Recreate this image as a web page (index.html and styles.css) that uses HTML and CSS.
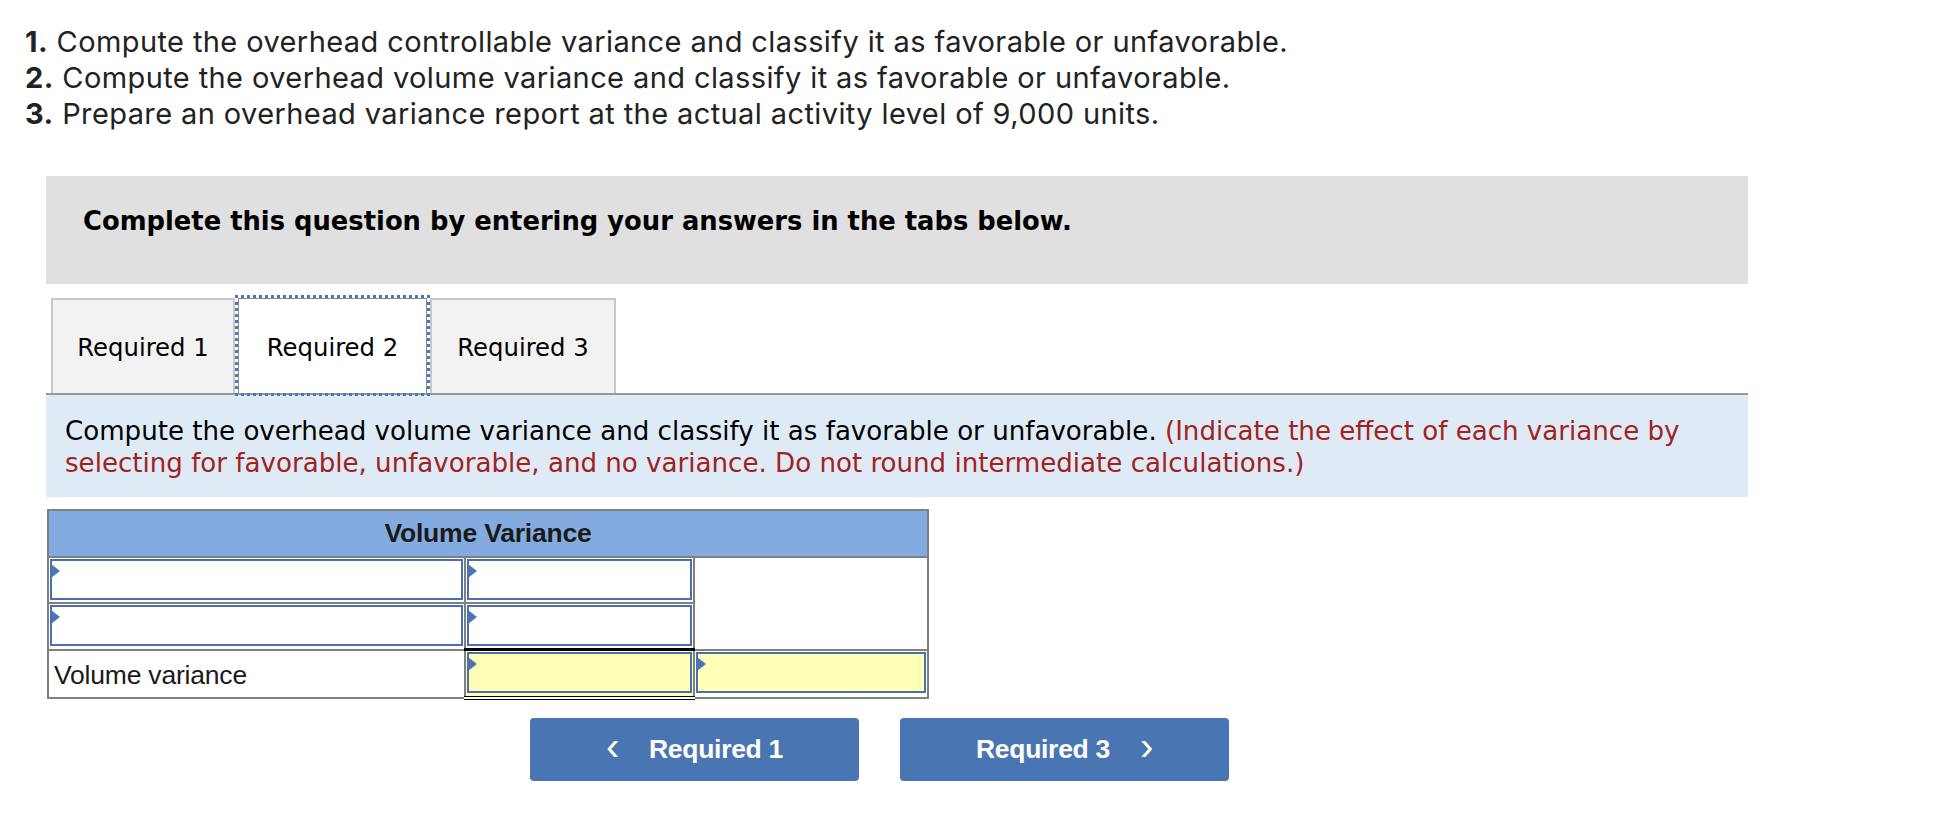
FILE: index.html
```html
<!DOCTYPE html>
<html>
<head>
<meta charset="utf-8">
<link rel="stylesheet" href="styles.css">
</head>
<body>
<div class="questions">
  <p><b>1.</b> Compute the overhead controllable variance and classify it as favorable or unfavorable.</p>
  <p><b>2.</b> Compute the overhead volume variance and classify it as favorable or unfavorable.</p>
  <p><b>3.</b> Prepare an overhead variance report at the actual activity level of 9,000 units.</p>
</div>

<div class="instruct-box">Complete this question by entering your answers in the tabs below.</div>

<div class="tabs">
  <div class="tab">Required 1</div>
  <div class="tab active">Required 2</div>
  <div class="tab">Required 3</div>
</div>

<div class="panel">
  Compute the overhead volume variance and classify it as favorable or unfavorable. <span class="red">(Indicate the effect of each variance by<br>selecting for favorable, unfavorable, and no variance. Do not round intermediate calculations.)</span>
</div>

<table class="vtable">
  <colgroup>
    <col class="w1">
    <col class="w2">
    <col class="w3">
  </colgroup>
  <tr><th colspan="3">Volume Variance</th></tr>
  <tr>
    <td><div class="inp"><span class="mark"></span></div></td>
    <td><div class="inp"><span class="mark"></span></div></td>
    <td class="blank" rowspan="2"></td>
  </tr>
  <tr>
    <td><div class="inp"><span class="mark"></span></div></td>
    <td><div class="inp"><span class="mark"></span></div></td>
  </tr>
  <tr>
    <td class="label">Volume variance</td>
    <td class="total"><div class="inp yellow"><span class="mark"></span></div></td>
    <td><div class="inp yellow"><span class="mark"></span></div></td>
  </tr>
</table>

<div class="nav">
  <div class="btn"><span class="chev">&lsaquo;</span>Required 1</div>
  <div class="btn"><span>Required 3</span><span class="chev right">&rsaquo;</span></div>
</div>
</body>
</html>
```

FILE: styles.css
```css
html, body {
  margin: 0;
  padding: 0;
  background: #ffffff;
}
body {
  width: 1936px;
}
.questions {
  padding: 24px 0 0 25px;
  font-family: "Inter", "Open Sans", sans-serif;
  font-size: 29px;
  letter-spacing: 0.4px;
  line-height: 36px;
  color: #222222;
}
.questions p {
  margin: 0;
  white-space: nowrap;
}
.questions b {
  font-weight: 700;
}
.instruct-box {
  margin: 44px 0 0 46px;
  width: 1702px;
  height: 108px;
  box-sizing: border-box;
  background: #e0e0e0;
  padding: 29px 0 0 37px;
  font-family: "DejaVu Sans", Verdana, sans-serif;
  font-weight: bold;
  font-size: 25.8px;
  line-height: 32px;
  color: #000;
  white-space: nowrap;
}
.tabs {
  display: flex;
  margin: 14px 0 0 51px;
  height: 95px;
  align-items: stretch;
}
.tab {
  box-sizing: border-box;
  height: 95px;
  border: 2px solid #c8c8c8;
  border-bottom: none;
  background: #f2f2f2;
  font-family: "DejaVu Sans", Verdana, sans-serif;
  font-size: 24.3px;
  color: #000;
  display: flex;
  align-items: center;
  justify-content: center;
  width: 184px;
  white-space: nowrap;
  padding-top: 2px;
}
.tab.active {
  background: #ffffff;
  width: 189px;
  margin: 0 3px;
  border: 1px solid #8a8a8a;
  border-bottom: none;
  outline: 3px dotted #4a78c0;
  outline-offset: 0;
  position: relative;
  z-index: 2;
}
.tab:last-child {
  width: 186px;
}
.panel {
  width: 1702px;
  margin-left: 46px;
  box-sizing: border-box;
  border-top: 2px solid #999999;
  background: #deebf7;
  padding: 20px 0 18px 19px;
  font-family: "DejaVu Sans", Verdana, sans-serif;
  font-size: 26.1px;
  line-height: 32px;
  color: #000;
  white-space: nowrap;
}
.red {
  color: #a2221c;
}
.vtable {
  margin: 12px 0 0 47px;
  border-collapse: collapse;
  border: 2px solid #808080;
  font-family: "Liberation Sans", Arial, sans-serif;
  table-layout: fixed;
  width: 880px;
}
.vtable col.w1 { width: 417px; }
.vtable col.w2 { width: 229px; }
.vtable col.w3 { width: 234px; }
.vtable th {
  background: #84abdf;
  height: 45px;
  font-size: 26.5px;
  font-weight: bold;
  color: #1a1a1a;
  border: 2px solid #808080;
  padding: 0;
  letter-spacing: -0.2px;
}
.vtable td {
  border: 2px solid #808080;
  padding: 1px;
  height: 42px;
  vertical-align: top;
  background: #fff;
}
.vtable td.blank {
  border-bottom: 2px solid #808080;
}
.vtable td.label {
  font-size: 26.5px;
  color: #1a1a1a;
  vertical-align: middle;
  padding: 4px 0 0 5px;
  letter-spacing: -0.2px;
  white-space: nowrap;
}
.vtable td.total {
  border-top: 3px solid #000;
  border-bottom: 4px double #000;
  padding: 1px 1px 0 1px;
  background: #ffffb8;
}
.inp {
  position: relative;
  box-sizing: border-box;
  height: 41px;
  border: 2px solid #4a70ad;
  background: #fff;
}
.inp.yellow {
  background: #ffffb8;
}
.mark {
  position: absolute;
  left: -1px;
  top: 3px;
  width: 0;
  height: 0;
  border-top: 7px solid transparent;
  border-bottom: 7px solid transparent;
  border-left: 9px solid #4a76b8;
}
.nav {
  display: flex;
  gap: 41px;
  margin: 18px 0 0 530px;
}
.btn {
  width: 329px;
  height: 63px;
  background: #4a75b3;
  border-radius: 4px;
  color: #fff;
  font-family: "Liberation Sans", Arial, sans-serif;
  font-weight: bold;
  font-size: 26.5px;
  letter-spacing: -0.3px;
  display: flex;
  align-items: center;
  justify-content: center;
  gap: 30px;
}
.chev {
  font-weight: normal;
  font-size: 40px;
  line-height: 1;
  margin-top: -6px;
}
```
